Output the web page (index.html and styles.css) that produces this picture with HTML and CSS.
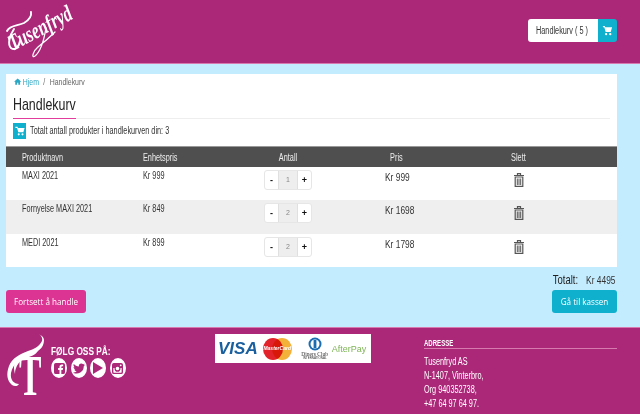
FILE: index.html
```html
<!DOCTYPE html>
<html lang="no">
<head>
<meta charset="utf-8">
<title>Handlekurv</title>
<link rel="stylesheet" href="styles.css">
</head>
<body>

<header class="site_header">
  <svg class="logo" width="78" height="63" viewBox="0 0 78 63">
    <g fill="none" stroke="#fff" stroke-linecap="round">
      <path d="M5 31C8 25 16 26 22 23C27 20 30 17 29 12" stroke-width="1.900"/>
      <path d="M12 29C8 35 5 44 9 48C13 51 17 47 18 41" stroke-width="1.900"/>
      <path d="M44 28C42 40 38 52 33 56C29 59 31 51 36 47C41 43 48 37 53 32" stroke-width="1.300"/>
    </g>
    <text class="logo_text" transform="translate(11 51) rotate(-28) scale(.72 1)">Tusenfryd</text>
  </svg>
  <div class="cart_link">
    <span class="cart_label"><span class="sq">Handlekurv ( 5 )</span></span>
    <span class="cart_icon">
      <svg width="11" height="11" viewBox="0 0 24 24"><path fill="#fff" d="M2 2h4l1 3h15l-3 10H8L5 5H2zM9 17.500a2.500 2.500 0 1 1 0 5 2.500 2.500 0 0 1 0-5zm9 0a2.500 2.500 0 1 1 0 5 2.500 2.500 0 0 1 0-5z"/></svg>
    </span>
  </div>
</header>

<main class="page">
  <section class="card">
    <div class="crumbs">
      <svg width="10" height="7" viewBox="0 0 24 24" preserveAspectRatio="none"><path fill="#2aa7c4" d="M12 2 0 13h4v10h6v-7h4v7h6V13h4z"/></svg>
      <span class="crumb_home">Hjem</span>
      <span class="crumb_sep">/</span>
      <span>Handlekurv</span>
    </div>
    <h1 class="title"><span class="sq">Handlekurv</span></h1>
    <div class="summary">
      <span class="summary_icon">
        <svg width="10" height="10" viewBox="0 0 24 24"><path fill="#fff" d="M1 2h5l1 3h16l-3 10H8L5 5H1zM9 17.500a2.500 2.500 0 1 1 0 5 2.500 2.500 0 0 1 0-5zm9 0a2.500 2.500 0 1 1 0 5 2.500 2.500 0 0 1 0-5z"/></svg>
      </span>
      <span class="sq">Totalt antall produkter i handlekurven din: 3</span>
    </div>

    <div class="row head">
      <div class="sq">Produktnavn</div>
      <div class="sq">Enhetspris</div>
      <div class="sq head_qty">Antall</div>
      <div class="sq head_pad">Pris</div>
      <div class="sq head_pad">Slett</div>
    </div>

    <div class="row item">
      <div class="sq">MAXI 2021</div>
      <div class="sq">Kr 999</div>
      <div class="stepper"><button>-</button><span>1</span><button>+</button></div>
      <div class="sq line_price">Kr 999</div>
      <div class="trash"><svg width="10" height="14" viewBox="0 0 10 14"><path fill="none" stroke="#555" stroke-width="1.200" d="M0 2.500h10M3.500 2.500V.6h3v1.900M1.200 4v9.400h7.600V4z"/><path fill="none" stroke="#555" d="M3.300 5.500v6.500M5 5.500v6.500M6.700 5.500v6.500"/></svg></div>
    </div>
    <div class="row item alt">
      <div class="sq">Fornyelse MAXI 2021</div>
      <div class="sq">Kr 849</div>
      <div class="stepper"><button>-</button><span>2</span><button>+</button></div>
      <div class="sq line_price">Kr 1698</div>
      <div class="trash"><svg width="10" height="14" viewBox="0 0 10 14"><path fill="none" stroke="#555" stroke-width="1.200" d="M0 2.500h10M3.500 2.500V.6h3v1.900M1.200 4v9.400h7.600V4z"/><path fill="none" stroke="#555" d="M3.300 5.500v6.500M5 5.500v6.500M6.700 5.500v6.500"/></svg></div>
    </div>
    <div class="row item">
      <div class="sq">MEDI 2021</div>
      <div class="sq">Kr 899</div>
      <div class="stepper"><button>-</button><span>2</span><button>+</button></div>
      <div class="sq line_price">Kr 1798</div>
      <div class="trash"><svg width="10" height="14" viewBox="0 0 10 14"><path fill="none" stroke="#555" stroke-width="1.200" d="M0 2.500h10M3.500 2.500V.6h3v1.900M1.200 4v9.400h7.600V4z"/><path fill="none" stroke="#555" d="M3.300 5.500v6.500M5 5.500v6.500M6.700 5.500v6.500"/></svg></div>
    </div>
  </section>

  <div class="checkout">
    <a class="btn btn_pink">Fortsett å handle</a>
    <div class="checkout_right">
      <div class="total"><span class="total_label">Totalt:</span><span>Kr 4495</span></div>
      <a class="btn btn_blue">Gå til kassen</a>
    </div>
  </div>
</main>

<footer class="site_footer">
  <div class="follow">
    <svg class="footer_logo" width="44" height="64" viewBox="0 0 44 64">
      <path fill="#fff" d="M32 0c3 1 5 4 4 7C33 13 28 15 22 17C14 20 6 24 3 32C0 40 1 47 6 51C9 53 12 52 13 50C8 50 4 46 5 39C7 29 15 24 23 21C31 18 38 15 38 6C38 3 35 1 32 0z"/>
      <path fill="#fff" d="M12 24C20 21 28 20 34 13C31 21 26 22 20 24C14 26 9 32 9 40C7 33 8 27 12 24z"/>
      <text class="footer_logo_t" transform="translate(13 61) scale(.58 1)">T</text>
    </svg>
    <div>
      <div class="sq follow_text">FØLG OSS PÅ:</div>
      <div class="socials">
        <span class="social"><svg width="11" height="11" viewBox="0 0 12 12"><path fill="#ab2879" fill-rule="evenodd" d="M2 0h8a2 2 0 0 1 2 2v8a2 2 0 0 1-2 2H8V7.500h1.500L10 5.500H8V4.500c0-.6.300-1 1-1h1V1.700H8.500C7 1.700 6 2.700 6 4.200v1.300H4.500v2H6V12H2a2 2 0 0 1-2-2V2a2 2 0 0 1 2-2z"/></svg></span>
        <span class="social"><svg width="12" height="11" viewBox="0 0 24 20"><path fill="#ab2879" d="M24 2.400c-.9.400-1.800.7-2.800.8 1-.6 1.800-1.600 2.200-2.700-1 .6-2 1-3.100 1.200A4.900 4.900 0 0 0 11.900 6.200C7.800 6 4.200 4 1.700 1c-1.300 2.200-.7 5 1.500 6.500-.8 0-1.500-.2-2.200-.6 0 2.300 1.600 4.400 3.900 4.900-.7.200-1.500.2-2.200.1.600 2 2.400 3.400 4.600 3.400A9.900 9.900 0 0 1 0 17.800 14 14 0 0 0 21.500 5.300c1-.7 1.800-1.700 2.500-2.900z"/></svg></span>
        <span class="social"><svg width="10" height="12" viewBox="0 0 10 12"><path fill="#ab2879" d="M0 0l10 6-10 6z"/></svg></span>
        <span class="social"><svg width="11" height="11" viewBox="0 0 12 12"><path fill="#ab2879" fill-rule="evenodd" d="M2 0h8a2 2 0 0 1 2 2v8a2 2 0 0 1-2 2H2a2 2 0 0 1-2-2V2a2 2 0 0 1 2-2zm7.500 1.500a1 1 0 1 0 0 2 1 1 0 0 0 0-2zM1.500 5.500V10c0 .3.200.5.500.5h8c.3 0 .5-.2.500-.5V5.500H9.200a3.300 3.300 0 1 1-6.400 0zM6 4a2 2 0 1 0 0 4 2 2 0 0 0 0-4z"/></svg></span>
      </div>
    </div>
  </div>

  <div class="payments">
    <span class="pay_visa">VISA</span>
    <span class="pay_mc"><i class="mc_red"></i><i class="mc_yellow"></i><b class="mc_text">MasterCard</b></span>
    <span class="pay_diners">
      <svg width="14" height="14" viewBox="0 0 14 14"><circle cx="7" cy="7" r="6.500" fill="#1a6db0"/><circle cx="7" cy="7" r="4.500" fill="#fff"/><rect x="5.600" y="3" width="2.800" height="8" fill="#1a6db0"/></svg>
      <span class="diners_name">Diners Club</span>
      <span class="diners_sub">INTERNATIONAL</span>
    </span>
    <span class="pay_after">AfterPay</span>
  </div>

  <div class="address">
    <h4 class="address_title"><span class="sq">ADRESSE</span></h4>
    <p class="sq">Tusenfryd AS</p>
    <p class="sq">N-1407, Vinterbro,</p>
    <p class="sq">Org 940352738,</p>
    <p class="sq">+47 64 97 64 97.</p>
  </div>
</footer>

</body>
</html>
```
FILE: styles.css
```css
* {
  box-sizing: border-box;
}
html, body {
  height: 414px;
  overflow: hidden;
}
body {
  margin: 0;
  font-family: "Liberation Sans", Arial, sans-serif;
  font-size: 10px;
  color: #333;
  background-color: #c3ecff;
}
/* text in the page is narrower than plain Arial */
.sq {
  display: inline-block;
  transform: scaleX(.73);
  transform-origin: left center;
  white-space: nowrap;
}
.site_header {
  display: flex;
  justify-content: space-between;
  align-items: flex-start;
  height: 64px;
  padding: 0 23px 0 0;
  background-color: #ab2879;
  border-bottom: 1px solid #d77ab0;
}
.logo {
  display: block;
  margin-left: 2px;
  overflow: visible;
}
.logo_text {
  font-family: "Liberation Serif", serif;
  font-style: italic;
  font-weight: bold;
  font-size: 23px;
  fill: #fff;
}
.cart_link {
  display: flex;
  height: 23px;
  margin-top: 19px;
  border-radius: 3px;
  overflow: hidden;
}
.cart_label {
  width: 70px;
  padding: 0 0 0 8px;
  line-height: 23px;
  background-color: #fff;
}
.cart_icon {
  display: flex;
  align-items: center;
  justify-content: center;
  width: 19px;
  background-color: #0fb0cd;
}
.page {
  height: 263px;
  padding: 10px 23px 0 6px;
}
.card {
  height: 193px;
  background-color: #fff;
}
.crumbs {
  display: flex;
  align-items: center;
  gap: 2px;
  height: 14px;
  padding: 1px 0 0 11px;
  font-size: 9.500px;
  color: #666;
  transform: scaleX(.73);
  transform-origin: left center;
}
.crumb_home {
  color: #2aa7c4;
}
.crumb_sep {
  margin: 0 4px;
}
.title {
  position: relative;
  height: 31px;
  margin: 0 7px;
  padding: 8px 0 5px;
  font-size: 17px;
  font-weight: normal;
  line-height: 17px;
  color: #222;
  border-bottom: 1px solid #eee;
}
.title::after {
  content: "";
  position: absolute;
  left: 0;
  bottom: -1px;
  width: 63px;
  height: 1px;
  background-color: #e23d9c;
}
.summary {
  display: flex;
  align-items: center;
  gap: 4px;
  height: 27px;
  padding: 0 0 4px 7px;
}
.summary_icon {
  display: flex;
  align-items: center;
  justify-content: center;
  width: 13px;
  height: 16px;
  background-color: #0fb0cd;
}
.row {
  display: grid;
  grid-template-columns: repeat(5, 121px);
  padding-left: 16px;
}
.head {
  height: 21px;
  align-items: center;
  color: #eee;
  background-color: #4f4f4f;
  border-top: 1px solid #999;
}
.head_qty {
  width: 48px;
  text-align: center;
  transform-origin: center;
}
.head_pad {
  padding-left: 7px;
}
.item {
  height: 33.330px;
  padding-top: 3px;
  line-height: 12px;
}
.alt {
  background-color: #efefef;
}
.stepper {
  display: flex;
  width: 48px;
  height: 20px;
  border: 1px solid #e6e6e6;
  border-radius: 3px;
  background-color: #fff;
}
.stepper button {
  width: 13px;
  padding: 0;
  border: none;
  background: none;
  font-family: inherit;
  font-size: 9px;
  font-weight: bold;
  color: #111;
}
.stepper span {
  display: flex;
  align-items: center;
  justify-content: center;
  width: 20px;
  font-size: 7px;
  color: #888;
  background-color: #eee;
  border-left: 1px solid #e0e0e0;
  border-right: 1px solid #e0e0e0;
}
.line_price {
  font-size: 11.500px;
  line-height: 14px;
}
.trash {
  padding: 3px 0 0 8px;
}
.checkout {
  display: flex;
  justify-content: space-between;
  align-items: flex-end;
  height: 46px;
}
.checkout_right {
  display: flex;
  flex-direction: column;
  align-items: flex-end;
}
.total {
  display: flex;
  align-items: center;
  gap: 11px;
  margin-bottom: 3px;
  padding-right: 2px;
  font-size: 11.500px;
  transform: scaleX(.73);
  transform-origin: right center;
}
.total_label {
  font-size: 13px;
  color: #222;
}
.btn {
  display: flex;
  align-items: center;
  justify-content: center;
  height: 23px;
  border-radius: 3px;
  font-family: "Open Sans", sans-serif;
  font-size: 8.100px;
  color: #fff;
}
.btn_pink {
  width: 80px;
  background-color: #dc3492;
}
.btn_blue {
  width: 65px;
  background-color: #0fb0cd;
}
.site_footer {
  display: grid;
  grid-template-columns: 209px 156px 1fr;
  height: 87px;
  padding-left: 6px;
  color: #fff;
  background-color: #ab2879;
  border-top: 1px solid #d77ab0;
}
.follow {
  display: flex;
  gap: 1px;
  padding-top: 6px;
}
.footer_logo {
  display: block;
  flex: none;
  overflow: visible;
}
.footer_logo_t {
  font-family: "Liberation Serif", serif;
  font-size: 58px;
  font-weight: bold;
  fill: #fff;
}
.follow_text {
  display: block;
  margin-top: 12px;
  font-size: 11.400px;
  font-weight: bold;
  line-height: 11px;
}
.socials {
  display: flex;
  gap: 3.500px;
  margin-top: 1px;
}
.social {
  display: flex;
  align-items: center;
  justify-content: center;
  width: 16px;
  height: 20px;
  border-radius: 50%;
  background-color: #fff;
}
.payments {
  display: flex;
  align-items: center;
  gap: 5px;
  height: 29px;
  margin-top: 6px;
  padding: 0 3px;
  background-color: #fff;
}
.pay_visa {
  font-size: 17px;
  font-weight: bold;
  font-style: italic;
  color: #1a5f9e;
}
.pay_mc {
  position: relative;
  width: 29px;
  height: 22px;
  flex: none;
  margin-right: 6px;
}
.mc_red, .mc_yellow {
  position: absolute;
  top: 0;
  width: 20px;
  height: 22px;
  border-radius: 50%;
}
.mc_red {
  left: 0;
  background-color: #e2232b;
}
.mc_yellow {
  right: 0;
  background-color: #f4b13a;
  mix-blend-mode: multiply;
}
.mc_text {
  position: absolute;
  left: 0;
  top: 7px;
  width: 29px;
  font-size: 5px;
  font-style: italic;
  line-height: 7px;
  text-align: center;
  color: #fff;
}
.pay_diners {
  display: flex;
  flex-direction: column;
  align-items: center;
  width: 24px;
  flex: none;
  color: #333;
}
.diners_name {
  font-family: "Liberation Serif", serif;
  font-size: 5.500px;
  line-height: 6px;
  white-space: nowrap;
}
.diners_sub {
  font-size: 3px;
  line-height: 3px;
  white-space: nowrap;
}
.pay_after {
  font-size: 9px;
  color: #7eb356;
  white-space: nowrap;
}
.address {
  padding: 11px 23px 0 53px;
}
.address_title {
  margin: 0 0 6px;
  font-size: 8.300px;
  line-height: 9px;
  border-bottom: 1px solid #d77ab0;
}
.address p {
  display: block;
  margin: 0;
  line-height: 14px;
}
```
